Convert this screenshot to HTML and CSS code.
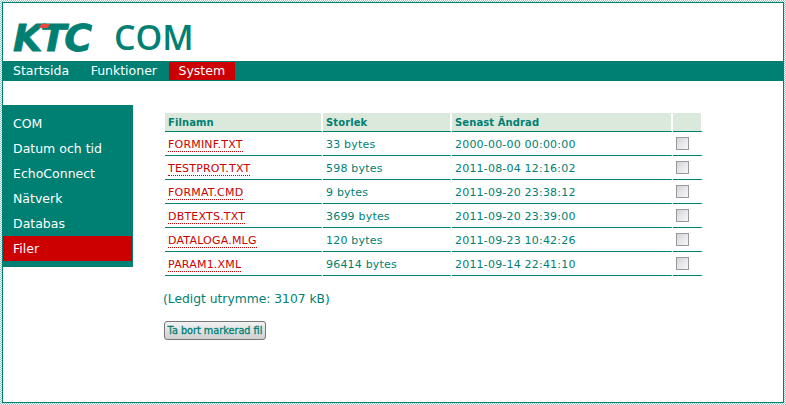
FILE: index.html
```html
<!DOCTYPE html>
<html lang="en">
    <head>
        <meta charset="UTF-8" />
        <title>KTC COM</title>
        <link rel="stylesheet" href="styles.css">
    </head>
    <body>
        <div class="frame">
            <div class="header">
                <div class="logo">
                    <span class="logo-text">KTC</span>
                    <span class="logo-mark"></span>
                </div>
                <div class="device-name">COM</div>
            </div>
            <div class="topnav">
                <a href="#">Startsida</a>
                <a href="#">Funktioner</a>
                <a href="#" class="active">System</a>
            </div>
            <div class="main">
                <div class="sidenav">
                    <a href="#">COM</a>
                    <a href="#">Datum och tid</a>
                    <a href="#">EchoConnect</a>
                    <a href="#">Nätverk</a>
                    <a href="#">Databas</a>
                    <a href="#" class="active">Filer</a>
                </div>
                <div class="content">
                    <table class="files">
                        <thead>
                            <tr>
                                <th class="col-name">Filnamn</th>
                                <th class="col-size">Storlek</th>
                                <th class="col-date">Senast Ändrad</th>
                                <th class="col-check"></th>
                            </tr>
                        </thead>
                        <tbody>
                            <tr>
                                <td><a href="#">FORMINF.TXT</a></td>
                                <td>33 bytes</td>
                                <td>2000-00-00 00:00:00</td>
                                <td><input type="checkbox" /></td>
                            </tr>
                            <tr>
                                <td><a href="#">TESTPROT.TXT</a></td>
                                <td>598 bytes</td>
                                <td>2011-08-04 12:16:02</td>
                                <td><input type="checkbox" /></td>
                            </tr>
                            <tr>
                                <td><a href="#">FORMAT.CMD</a></td>
                                <td>9 bytes</td>
                                <td>2011-09-20 23:38:12</td>
                                <td><input type="checkbox" /></td>
                            </tr>
                            <tr>
                                <td><a href="#">DBTEXTS.TXT</a></td>
                                <td>3699 bytes</td>
                                <td>2011-09-20 23:39:00</td>
                                <td><input type="checkbox" /></td>
                            </tr>
                            <tr>
                                <td><a href="#">DATALOGA.MLG</a></td>
                                <td>120 bytes</td>
                                <td>2011-09-23 10:42:26</td>
                                <td><input type="checkbox" /></td>
                            </tr>
                            <tr>
                                <td><a href="#">PARAM1.XML</a></td>
                                <td>96414 bytes</td>
                                <td>2011-09-14 22:41:10</td>
                                <td><input type="checkbox" /></td>
                            </tr>
                        </tbody>
                    </table>
                    <div class="free-space">(Ledigt utrymme: 3107 kB)</div>
                    <button type="button" class="delete-btn">Ta bort markerad fil</button>
                </div>
            </div>
        </div>
    </body>
</html>
```
FILE: styles.css
```css
* {
    box-sizing: border-box;
}
html, body {
    height: 100%;
}
body {
    margin: 0;
    padding: 2px;
    overflow: hidden;
    background-color: #ffffff;
    background-image: conic-gradient(#8cc5bf 25%, #ffffff 0 50%, #8cc5bf 0 75%, #ffffff 0);
    background-size: 2px 2px;
    font-family: "DejaVu Sans", Verdana, sans-serif;
    color: #007f73;
}
a {
    text-decoration: none;
}
.frame {
    height: 100%;
    background-color: #ffffff;
    border: 1px solid #007f73;
}
.header {
    display: flex;
    align-items: flex-end;
    height: 58px;
    padding: 0 0 8px 10px;
}
.logo {
    position: relative;
    width: 78px;
    height: 30px;
    line-height: 30px;
}
.logo-text {
    font-family: "DejaVu Sans", sans-serif;
    font-size: 38px;
    font-weight: bold;
    font-style: italic;
    letter-spacing: -2px;
    color: #007f73;
    -webkit-text-stroke: 0.8px #007f73;
}
.logo-mark {
    position: absolute;
    left: 27px;
    top: 1px;
    width: 9px;
    height: 4px;
    background-color: #e8473f;
    transform: skewX(-35deg);
}
.device-name {
    margin: 0 0 1px 23px;
    height: 30px;
    line-height: 30px;
    font-family: "Open Sans", sans-serif;
    font-size: 34px;
    font-weight: 600;
    color: #007f73;
}
.topnav {
    display: flex;
    height: 20px;
    background-color: #007f73;
}
.topnav a {
    padding: 0 10px;
    margin-right: 1.5px;
    font-size: 12.5px;
    line-height: 20px;
    color: #ffffff;
}
.topnav a.active {
    background-color: #cc0000;
    margin-top: 1px;
    line-height: 18px;
    height: 18px;
}
.main {
    display: flex;
    align-items: flex-start;
    padding-top: 24px;
}
.sidenav {
    width: 130px;
    padding: 6px 1px 6px 0;
    background-color: #007f73;
}
.sidenav a {
    display: block;
    height: 25px;
    padding-left: 10px;
    font-size: 12.5px;
    line-height: 25px;
    color: #ffffff;
}
.sidenav a.active {
    background-color: #cc0000;
}
.content {
    padding: 8px 0 0 32px;
}
.files {
    border-collapse: separate;
    border-spacing: 0;
    table-layout: fixed;
    width: 538px;
    font-size: 11px;
    letter-spacing: 0.2px;
}
.files th {
    height: 19px;
    padding: 0 3px;
    text-align: left;
    font-size: 10px;
    font-weight: bold;
    letter-spacing: 0.1px;
    background-color: #dbe8dc;
    border-bottom: 1px solid #007f73;
    border-right: 2px solid #ffffff;
}
.files td {
    height: 24px;
    padding: 1px 3px 0;
    border-bottom: 1px solid #007f73;
    border-right: 2px solid #ffffff;
}
.col-name {
    width: 158px;
}
.col-size {
    width: 129px;
}
.col-date {
    width: 221px;
}
.files td a {
    color: #cc0000;
    border-bottom: 1px dotted #cc0000;
}
.files input {
    appearance: none;
    display: block;
    width: 13px;
    height: 13px;
    margin: -1px 0 0;
    border: 1px solid #999999;
    background: linear-gradient(135deg, #d4d4dc, #f8f8fa);
}
.free-space {
    margin: 15px 0 0 -2px;
    font-size: 12.3px;
    line-height: 16px;
}
.delete-btn {
    display: block;
    margin: 14px 0 0 -1px;
    width: 102px;
    height: 19px;
    padding: 0;
    font-family: "DejaVu Sans", Verdana, sans-serif;
    font-size: 9.7px;
    font-weight: normal;
    color: #007f73;
    -webkit-text-stroke: 0.3px #007f73;
    background: linear-gradient(#f2f2f2, #cfcfcf);
    border: 1px solid #777777;
    border-radius: 3px;
    white-space: nowrap;
}
```
